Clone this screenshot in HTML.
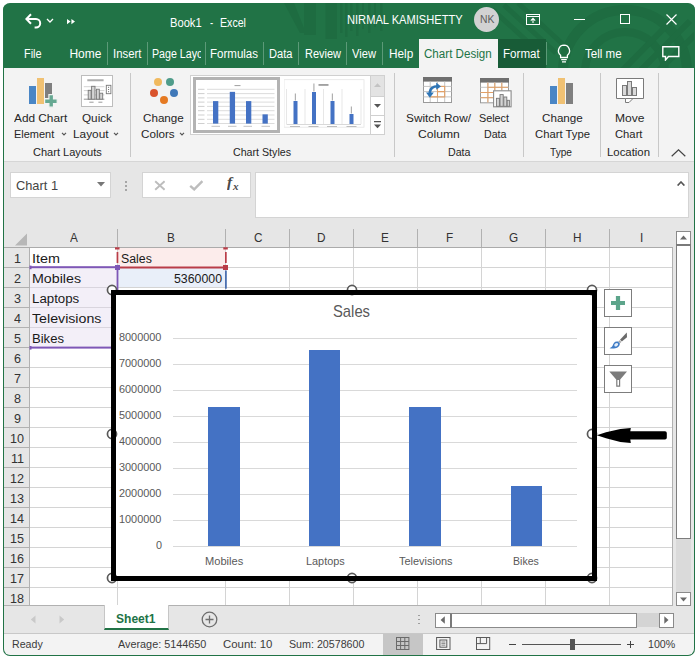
<!DOCTYPE html>
<html><head><meta charset="utf-8"><title>Book1 - Excel</title>
<style>
html,body{margin:0;padding:0;background:#fff;}
body{width:699px;height:662px;position:relative;overflow:hidden;font-family:"Liberation Sans",sans-serif;}
#win{position:absolute;left:3px;top:3px;width:692px;height:653px;border-radius:7px;overflow:hidden;background:#e6e6e6;box-sizing:border-box;}
#in{position:absolute;left:-3px;top:-3px;width:699px;height:662px;}
.r{position:absolute;box-sizing:border-box;}
.t{position:absolute;white-space:pre;transform-origin:0 50%;}
.clip{position:absolute;overflow:hidden;}
</style></head><body>
<div id="win"><div id="in">
<div class="r" style="left:0px;top:0px;width:699px;height:68px;background:#217346;"></div>
<svg class="r" style="left:280px;top:3px" width="419" height="65" viewBox="0 0 419 65">
<g fill="#1e6c41">
<path d="M4 0 H14 L26 30 H20 Z"/>
<rect x="24" y="0" width="12" height="32"/><rect x="45.5" y="0" width="11.5" height="36"/>
<rect x="60" y="0" width="2.5" height="30"/><rect x="65" y="0" width="2.5" height="34"/><rect x="70" y="0" width="2.5" height="28"/>
<rect x="76" y="0" width="2.5" height="33"/><rect x="82" y="0" width="2" height="26"/><rect x="88" y="0" width="2.5" height="30"/>
<rect x="94" y="0" width="2" height="24"/><rect x="100" y="0" width="2.5" height="28"/>
</g>
<g stroke="#1e6c41" fill="none">
<circle cx="345" cy="69" r="62" stroke-width="10"/><circle cx="345" cy="69" r="40" stroke-width="8"/>
<path d="M212 6 L262 52 M224 2 L276 50 M238 0 L288 46" stroke-width="5"/>
<path d="M340 70 L395 14 M356 72 L410 18 M372 74 L419 28" stroke-width="6"/>
</g></svg>
<svg class="r" style="left:24px;top:12px" width="20" height="18" viewBox="0 0 20 18"><path d="M3 7 H12 A4.2 4.2 0 0 1 12 15.4 H10.6" fill="none" stroke="#fff" stroke-width="2"/><path d="M7 2.2 L2.4 7 L7 11.8" fill="none" stroke="#fff" stroke-width="2"/></svg>
<svg class="r" style="left:46px;top:18px" width="8" height="6" viewBox="0 0 8 6"><path d="M1 1 L4 4 L7 1" fill="none" stroke="#fff" stroke-width="1.3"/></svg>
<svg class="r" style="left:66px;top:18px" width="10" height="8" viewBox="0 0 10 8"><path d="M1 1 L4.6 3.6 L1 6.2 Z M5.4 1 L9 3.6 L5.4 6.2 Z" fill="#fff"/></svg>
<span class="t" style="left:170.40px;top:16.00px;font-size:12px;line-height:15px;color:#fff;transform:scaleX(0.9294);">Book1</span>
<span class="t" style="left:210.00px;top:16.00px;font-size:12px;line-height:15px;color:#fff;transform:scaleX(0.8000);">-</span>
<span class="t" style="left:220.40px;top:16.00px;font-size:12px;line-height:15px;color:#fff;transform:scaleX(0.8851);">Excel</span>
<span class="t" style="left:347.40px;top:13.00px;font-size:12px;line-height:15px;color:#fff;transform:scaleX(0.9265);">NIRMAL KAMISHETTY</span>
<div class="r" style="left:473.5px;top:7px;width:25px;height:25px;background:#d2d2d2;border-radius:50%;"></div>
<span class="t" style="left:479.60px;top:12.00px;font-size:11px;line-height:14px;color:#5c5c5c;transform:scaleX(0.9404);">NK</span>
<svg class="r" style="left:526px;top:13.5px" width="14" height="11" viewBox="0 0 14 11"><rect x="0.5" y="0.5" width="13" height="10" fill="none" stroke="#fff" stroke-width="1"/><path d="M0.5 2.5 H13.5" stroke="#fff"/><path d="M7 9 V4.5 M4.8 6.6 L7 4.4 L9.2 6.6" fill="none" stroke="#fff" stroke-width="1.1"/></svg>
<div class="r" style="left:574px;top:18.5px;width:11px;height:1.2px;background:#fff;"></div>
<div class="r" style="left:620px;top:14px;width:10px;height:10px;border:1.2px solid #fff;"></div>
<svg class="r" style="left:666px;top:13.5px" width="11" height="11" viewBox="0 0 11 11"><path d="M0.5 0.5 L10.5 10.5 M10.5 0.5 L0.5 10.5" stroke="#fff" stroke-width="1.2"/></svg>
<span class="t" style="left:24.40px;top:47.00px;font-size:12px;line-height:15px;color:#fff;transform:scaleX(0.9113);">File</span>
<span class="t" style="left:69.40px;top:47.00px;font-size:12px;line-height:15px;color:#fff;transform:scaleX(1.0000);">Home</span>
<span class="t" style="left:113.30px;top:47.00px;font-size:12px;line-height:15px;color:#fff;transform:scaleX(0.9467);">Insert</span>
<div class="clip" style="left:151.10px;top:47.00px;width:49.6px;height:15px"><span class="t" style="left:152.10px;top:47.00px;font-size:12px;line-height:15px;color:#fff;transform:scaleX(0.8876);left:1.00px;top:0">Page Layout</span></div>
<span class="t" style="left:210.40px;top:47.00px;font-size:12px;line-height:15px;color:#fff;transform:scaleX(0.9600);">Formulas</span>
<span class="t" style="left:269.00px;top:47.00px;font-size:12px;line-height:15px;color:#fff;transform:scaleX(0.9222);">Data</span>
<span class="t" style="left:304.70px;top:47.00px;font-size:12px;line-height:15px;color:#fff;transform:scaleX(0.9128);">Review</span>
<span class="t" style="left:352.30px;top:47.00px;font-size:12px;line-height:15px;color:#fff;transform:scaleX(0.9275);">View</span>
<span class="t" style="left:388.70px;top:47.00px;font-size:12px;line-height:15px;color:#fff;transform:scaleX(0.9843);">Help</span>
<div class="r" style="left:106.9px;top:42px;width:1px;height:23px;background:#5c9a78;"></div>
<div class="r" style="left:147.1px;top:42px;width:1px;height:23px;background:#5c9a78;"></div>
<div class="r" style="left:205.1px;top:42px;width:1px;height:23px;background:#5c9a78;"></div>
<div class="r" style="left:263.1px;top:42px;width:1px;height:23px;background:#5c9a78;"></div>
<div class="r" style="left:297.5px;top:42px;width:1px;height:23px;background:#5c9a78;"></div>
<div class="r" style="left:345.8px;top:42px;width:1px;height:23px;background:#5c9a78;"></div>
<div class="r" style="left:381.5px;top:42px;width:1px;height:23px;background:#5c9a78;"></div>
<div class="r" style="left:419px;top:39px;width:79px;height:29px;background:#f3f3f3;"></div>
<span class="t" style="left:424.30px;top:47.00px;font-size:12px;line-height:15px;color:#217346;transform:scaleX(0.9663);">Chart Design</span>
<div class="r" style="left:498px;top:39px;width:48px;height:29px;background:#185c37;"></div>
<span class="t" style="left:503.30px;top:47.00px;font-size:12px;line-height:15px;color:#fff;transform:scaleX(0.9658);">Format</span>
<div class="r" style="left:546px;top:42px;width:1px;height:23px;background:#5c9a78;"></div>
<svg class="r" style="left:556px;top:44px" width="16" height="20" viewBox="0 0 16 20"><path d="M8 1.2 A5.6 5.6 0 0 0 4.6 11.2 V13.5 H11.4 V11.2 A5.6 5.6 0 0 0 8 1.2 Z" fill="none" stroke="#fff" stroke-width="1.3"/><path d="M5.2 15.6 H10.8 M6 17.8 H10" stroke="#fff" stroke-width="1.2"/></svg>
<span class="t" style="left:585.00px;top:47.00px;font-size:12px;line-height:15px;color:#fff;transform:scaleX(0.9658);">Tell me</span>
<svg class="r" style="left:662px;top:46px" width="18" height="15" viewBox="0 0 18 15"><path d="M0.8 0.8 H16.8 V10.5 H6.5 L3.5 14 V10.5 H0.8 Z" fill="none" stroke="#fff" stroke-width="1.4"/></svg>
<div class="r" style="left:0px;top:68px;width:699px;height:93.5px;background:#f3f3f3;"></div>
<div class="r" style="left:0px;top:161px;width:699px;height:1px;background:#d6d6d6;"></div>
<div class="r" style="left:29px;top:86px;width:7px;height:17.6px;background:#4a86c5;"></div>
<div class="r" style="left:36.6px;top:78px;width:7.4px;height:25.6px;background:#f0c173;"></div>
<div class="r" style="left:45.2px;top:83px;width:6.5px;height:14.5px;background:#7f7f7f;"></div>
<svg class="r" style="left:44px;top:94px" width="14" height="14" viewBox="0 0 14 14"><path d="M4.9 0.6 H9.5 V4.9 H13.2 V9.5 H9.5 V13.2 H4.9 V9.5 H0.6 V4.9 H4.9 Z" fill="#66a892" stroke="#f3f3f3" stroke-width="1.2"/></svg>
<span class="t" style="left:14.30px;top:111.00px;font-size:11.5px;line-height:14px;color:#262626;transform:scaleX(1.0280);">Add Chart</span>
<span class="t" style="left:14.30px;top:127.00px;font-size:11.5px;line-height:14px;color:#262626;transform:scaleX(0.9529);">Element</span>
<svg class="r" style="left:61px;top:131.9px" width="6" height="4" viewBox="0 0 6 4"><path d="M1 0.8 L3 2.9 L5 0.8" fill="none" stroke="#555" stroke-width="1.15"/></svg>
<div class="r" style="left:81.3px;top:75.3px;width:31.4px;height:31.4px;background:#fff;border:1px solid #bdbdbd;"></div>
<svg class="r" style="left:82px;top:76px" width="30" height="30" viewBox="0 0 30 30"><path d="M5.3 4.2 H21.6" stroke-width="2" stroke="#adadad"/>
<g stroke="#c6c6c6" stroke-width="0.8"><path d="M1.8 10.7 H22.4 M1.8 14.6 H22.4 M1.8 18.9 H22.4"/></g>
<path d="M1.8 23.2 H22.4" stroke="#8a8a8a" stroke-width="0.9"/>
<g fill="#d4d4d4" stroke="#777" stroke-width="0.9">
<rect x="6.2" y="14.3" width="2.9" height="8.9"/><rect x="9.6" y="10.3" width="3.4" height="12.9"/><rect x="14.4" y="13.2" width="2.9" height="10"/><rect x="17.7" y="17.2" width="3" height="6"/></g>
<rect x="24.3" y="9.3" width="4.6" height="8.4" fill="#fff" stroke="#777" stroke-width="0.9"/>
<g fill="#666"><rect x="26.1" y="10.8" width="1" height="1"/><rect x="26.1" y="13" width="1" height="1"/><rect x="26.1" y="15.2" width="1" height="1"/></g>
<path d="M7.3 26.2 H11.6 M16.4 26.2 H20.4" stroke="#9a9a9a" stroke-width="1"/></svg>
<span class="t" style="left:81.80px;top:111.00px;font-size:11.5px;line-height:14px;color:#262626;transform:scaleX(1.0191);">Quick</span>
<span class="t" style="left:73.30px;top:127.00px;font-size:11.5px;line-height:14px;color:#262626;transform:scaleX(1.0290);">Layout</span>
<svg class="r" style="left:113px;top:131.9px" width="6" height="4" viewBox="0 0 6 4"><path d="M1 0.8 L3 2.9 L5 0.8" fill="none" stroke="#555" stroke-width="1.15"/></svg>
<span class="t" style="left:32.50px;top:145.00px;font-size:11.5px;line-height:14px;color:#262626;transform:scaleX(0.9606);">Chart Layouts</span>
<div class="r" style="left:130px;top:73px;width:1px;height:84px;background:#c8c8c8;"></div>
<div class="r" style="left:154px;top:78px;width:8px;height:8px;background:#f0b95e;border-radius:50%;"></div>
<div class="r" style="left:166px;top:78px;width:8px;height:8px;background:#4f9c8a;border-radius:50%;"></div>
<div class="r" style="left:150px;top:89px;width:8px;height:8px;background:#d9532c;border-radius:50%;"></div>
<div class="r" style="left:170px;top:89px;width:8px;height:8px;background:#3f78b8;border-radius:50%;"></div>
<div class="r" style="left:160px;top:96px;width:8px;height:8px;background:#e57a22;border-radius:50%;"></div>
<span class="t" style="left:143.00px;top:111.00px;font-size:11.5px;line-height:14px;color:#262626;transform:scaleX(1.0121);">Change</span>
<span class="t" style="left:141.30px;top:127.00px;font-size:11.5px;line-height:14px;color:#262626;transform:scaleX(1.0135);">Colors</span>
<svg class="r" style="left:179px;top:131.9px" width="6" height="4" viewBox="0 0 6 4"><path d="M1 0.8 L3 2.9 L5 0.8" fill="none" stroke="#555" stroke-width="1.15"/></svg>
<div class="r" style="left:190px;top:75px;width:194.5px;height:59.5px;background:#fff;border:1px solid #d0d0d0;"></div>
<div class="r" style="left:192.5px;top:77px;width:87px;height:55.5px;background:#fff;border:3px solid #b3b3b3;"></div>
<svg class="r" style="left:192.5px;top:72.5px" width="87" height="60" viewBox="0 0 87 60"><g stroke="#cdcdcd" stroke-width="0.7"><path d="M14 16.3 H81.5"/><path d="M14 20.6 H81.5"/><path d="M14 24.9 H81.5"/><path d="M14 29.1 H81.5"/><path d="M14 33.4 H81.5"/><path d="M14 37.7 H81.5"/><path d="M14 42.0 H81.5"/><path d="M14 46.3 H81.5"/><path d="M14 50.5 H81.5"/></g><rect x="20" y="28.1" width="5.3" height="22.5" fill="#4472c4"/><rect x="36.75" y="18.85" width="5.3" height="31.75" fill="#4472c4"/><rect x="53" y="28.1" width="5.3" height="22.5" fill="#4472c4"/><rect x="69.5" y="41.35" width="5.3" height="9.25" fill="#4472c4"/><rect x="5" y="15.8" width="6.5" height="1" fill="#cfcfcf"/><rect x="5" y="20.1" width="6.5" height="1" fill="#cfcfcf"/><rect x="5" y="24.4" width="6.5" height="1" fill="#cfcfcf"/><rect x="5" y="28.6" width="6.5" height="1" fill="#cfcfcf"/><rect x="5" y="32.9" width="6.5" height="1" fill="#cfcfcf"/><rect x="5" y="37.2" width="6.5" height="1" fill="#cfcfcf"/><rect x="5" y="41.5" width="6.5" height="1" fill="#cfcfcf"/><rect x="5" y="45.8" width="6.5" height="1" fill="#cfcfcf"/><rect x="5" y="50.0" width="6.5" height="1" fill="#cfcfcf"/><rect x="18.5" y="52.8" width="8.5" height="1" fill="#c4c4c4"/><rect x="35" y="52.8" width="8.5" height="1" fill="#c4c4c4"/><rect x="50.5" y="52.8" width="8.5" height="1" fill="#c4c4c4"/><rect x="68.5" y="52.8" width="8.5" height="1" fill="#c4c4c4"/><rect x="41.5" y="12" width="6" height="1.1" fill="#a8a8a8"/></svg>
<svg class="r" style="left:284px;top:68.8px" width="82" height="62" viewBox="0 0 82 62"><rect x="0" y="10.7" width="80" height="47.5" fill="none" stroke="#e4e4e4" stroke-width="0.8"/><g stroke="#dcdcdc" stroke-width="0.7"><path d="M2.5 20 V55"/><path d="M21 20 V55"/><path d="M39.5 20 V55"/><path d="M58 20 V55"/><path d="M77 20 V55"/><path d="M2.5 55.5 H77" stroke="#c8c8c8"/></g><rect x="9.5" y="32" width="4" height="23" fill="#4472c4"/><rect x="10.8" y="24.5" width="1.2" height="7" fill="#b0b0b0"/><rect x="28" y="23" width="4" height="32" fill="#4472c4"/><rect x="29.3" y="14.5" width="1.2" height="8" fill="#b0b0b0"/><rect x="46.5" y="32" width="4" height="23" fill="#4472c4"/><rect x="47.8" y="24.5" width="1.2" height="7" fill="#b0b0b0"/><rect x="65.5" y="45" width="4" height="10" fill="#4472c4"/><rect x="66.8" y="37.5" width="1.2" height="7" fill="#b0b0b0"/><rect x="6" y="57" width="10" height="1" fill="#bdbdbd"/><rect x="24.5" y="57" width="10" height="1" fill="#bdbdbd"/><rect x="43" y="57" width="10" height="1" fill="#bdbdbd"/><rect x="62.5" y="57" width="10" height="1" fill="#bdbdbd"/><rect x="34.5" y="15.2" width="10" height="1.5" fill="#8a8a8a"/></svg>
<div class="r" style="left:369.5px;top:75px;width:15px;height:21.5px;background:#e3e3e3;border:1px solid #d0d0d0;"></div>
<div class="r" style="left:369.5px;top:95.5px;width:15px;height:20px;background:#fff;border:1px solid #d0d0d0;"></div>
<div class="r" style="left:369.5px;top:114.5px;width:15px;height:20px;background:#fff;border:1px solid #d0d0d0;"></div>
<svg class="r" style="left:373.5px;top:83px" width="7" height="4" viewBox="0 0 7 4"><path d="M0 4 L3.5 0.3 L7 4 Z" fill="#c3c3c3"/></svg>
<svg class="r" style="left:373.5px;top:104px" width="7" height="4" viewBox="0 0 7 4"><path d="M0 0 L3.5 3.7 L7 0 Z" fill="#555"/></svg>
<svg class="r" style="left:373.5px;top:120.5px" width="7" height="8" viewBox="0 0 7 8"><path d="M0 0.6 H7" stroke="#555" stroke-width="1.2"/><path d="M0 3.5 L3.5 7.2 L7 3.5 Z" fill="#555"/></svg>
<span class="t" style="left:232.50px;top:145.00px;font-size:11.5px;line-height:14px;color:#262626;transform:scaleX(0.9261);">Chart Styles</span>
<div class="r" style="left:394px;top:73px;width:1px;height:84px;background:#c8c8c8;"></div>
<svg class="r" style="left:423px;top:77px" width="29" height="26" viewBox="0 0 29 26"><rect x="0.5" y="0.5" width="28" height="25" fill="#fff" stroke="#9a9a9a"/><rect x="0" y="0" width="29" height="4.6" fill="#6f6f6f"/>
<g stroke="#c4c4c4" stroke-width="1"><path d="M0.5 9.4 H28.5 M0.5 14.6 H28.5 M0.5 19.9 H28.5 M7.2 4.6 V25 M14.5 4.6 V25 M21.7 4.6 V25"/></g>
<g fill="none" stroke="#e2a066" stroke-width="1.1"><rect x="14.5" y="9.4" width="7.2" height="10.5"/><path d="M14.5 14.6 H21.7 M7.2 19.9 H14.5"/></g>
<path d="M6.8 17 C6.6 11.5 10 9.3 15 9.3" fill="none" stroke="#2f75b5" stroke-width="2.6"/><path d="M13.2 5.4 L18 9.4 L13.2 12.8 Z" fill="#2f75b5"/><path d="M3 15.6 L6.9 20.7 L10.8 15.6 Z" fill="#2f75b5"/></svg>
<span class="t" style="left:405.50px;top:111.00px;font-size:11.5px;line-height:14px;color:#262626;transform:scaleX(1.0267);">Switch Row/</span>
<span class="t" style="left:417.50px;top:127.00px;font-size:11.5px;line-height:14px;color:#262626;transform:scaleX(1.0549);">Column</span>
<svg class="r" style="left:480px;top:78px" width="32" height="30" viewBox="0 0 32 30"><rect x="0.5" y="0.5" width="28" height="24.3" fill="#fff" stroke="#9a9a9a"/><rect x="0" y="0" width="29" height="4.6" fill="#6f6f6f"/>
<g stroke="#c4c4c4"><path d="M0.5 9.3 H28.5 M0.5 14.5 H28.5 M0.5 19.7 H28.5 M7.9 4.6 V24.5 M14.8 4.6 V24.5 M21.8 4.6 V24.5"/></g>
<path d="M7.9 4.6 V24.5 M7.9 9.3 H28 M0.5 14.5 H14 M0.5 19.7 H14 M14.8 4.6 V12 M21.8 4.6 V12" stroke="#e2a066" fill="none"/>
<rect x="13.6" y="12.8" width="17.5" height="16" fill="#fff" stroke="#8a8a8a" stroke-width="1.1"/>
<g fill="#d4d4d4" stroke="#777" stroke-width="0.9"><rect x="16.4" y="20.3" width="3" height="8"/><rect x="20" y="16.6" width="3.2" height="11.7"/><rect x="23.8" y="19" width="3" height="9.3"/><rect x="27.2" y="22.3" width="2.2" height="6"/></g></svg>
<span class="t" style="left:479.30px;top:111.00px;font-size:11.5px;line-height:14px;color:#262626;transform:scaleX(0.9393);">Select</span>
<span class="t" style="left:483.80px;top:127.00px;font-size:11.5px;line-height:14px;color:#262626;transform:scaleX(0.9254);">Data</span>
<span class="t" style="left:447.50px;top:145.00px;font-size:11.5px;line-height:14px;color:#262626;transform:scaleX(0.9254);">Data</span>
<div class="r" style="left:523px;top:73px;width:1px;height:84px;background:#c8c8c8;"></div>
<div class="r" style="left:549.8px;top:86.3px;width:7.2px;height:17.5px;background:#4a86c5;"></div>
<div class="r" style="left:557.6px;top:78px;width:7.6px;height:25.8px;background:#f0c173;"></div>
<div class="r" style="left:566px;top:83px;width:6.8px;height:20.8px;background:#7f7f7f;"></div>
<span class="t" style="left:542.00px;top:111.00px;font-size:11.5px;line-height:14px;color:#262626;transform:scaleX(1.0121);">Change</span>
<span class="t" style="left:534.50px;top:127.00px;font-size:11.5px;line-height:14px;color:#262626;transform:scaleX(0.9810);">Chart Type</span>
<span class="t" style="left:550.30px;top:145.00px;font-size:11.5px;line-height:14px;color:#262626;transform:scaleX(0.8822);">Type</span>
<div class="r" style="left:600px;top:73px;width:1px;height:84px;background:#c8c8c8;"></div>
<svg class="r" style="left:616px;top:78px" width="28" height="25" viewBox="0 0 28 25"><path d="M0.5 0.5 H27.5 V20.5 H17 L13 24.5 H9.5 V20.5 H0.5 Z" fill="#fff" stroke="#7a7a7a"/><path d="M9.5 20.5 H17" stroke="#7a7a7a"/>
<g fill="#d9d9d9" stroke="#7a7a7a"><rect x="6.5" y="7.5" width="4" height="10"/><rect x="11.5" y="3.5" width="4" height="14"/><rect x="16.5" y="9.5" width="4" height="8"/></g></svg>
<span class="t" style="left:615.30px;top:111.00px;font-size:11.5px;line-height:14px;color:#262626;transform:scaleX(1.0489);">Move</span>
<span class="t" style="left:615.30px;top:127.00px;font-size:11.5px;line-height:14px;color:#262626;transform:scaleX(0.9778);">Chart</span>
<span class="t" style="left:607.30px;top:145.00px;font-size:11.5px;line-height:14px;color:#262626;transform:scaleX(0.9885);">Location</span>
<div class="r" style="left:658px;top:73px;width:1px;height:84px;background:#c8c8c8;"></div>
<svg class="r" style="left:671px;top:149px" width="15" height="8" viewBox="0 0 15 8"><path d="M0.7 7.3 L7.5 0.8 L14.3 7.3" fill="none" stroke="#444" stroke-width="1.2"/></svg>
<div class="r" style="left:0px;top:162px;width:699px;height:66px;background:#e6e6e6;"></div>
<div class="r" style="left:10px;top:172px;width:100.5px;height:26px;background:#fff;border:1px solid #d4d4d4;"></div>
<span class="t" style="left:16.30px;top:178.00px;font-size:13px;line-height:16px;color:#444;transform:scaleX(0.9853);">Chart 1</span>
<svg class="r" style="left:96.5px;top:182px" width="8" height="5" viewBox="0 0 8 5"><path d="M0 0 H8 L4 4.6 Z" fill="#777"/></svg>
<div class="r" style="left:125.3px;top:180.5px;width:2px;height:2px;background:#a6a6a6;"></div>
<div class="r" style="left:125.3px;top:184.5px;width:2px;height:2px;background:#a6a6a6;"></div>
<div class="r" style="left:125.3px;top:188.5px;width:2px;height:2px;background:#a6a6a6;"></div>
<div class="r" style="left:141.5px;top:172px;width:109px;height:26px;background:#fff;border:1px solid #d4d4d4;"></div>
<svg class="r" style="left:154px;top:180px" width="12" height="11" viewBox="0 0 12 11"><path d="M1.2 1.2 L10.6 9.8 M10.6 1.2 L1.2 9.8" stroke="#bdbdbd" stroke-width="1.9"/></svg>
<svg class="r" style="left:189px;top:180px" width="15" height="11" viewBox="0 0 15 11"><path d="M1.2 5.8 L5.2 9.4 L13.4 1.2" fill="none" stroke="#bdbdbd" stroke-width="2.4"/></svg>
<span class="t" style="left:227.00px;top:173.00px;font-size:15px;line-height:19px;color:#4a4a4a;transform:scaleX(1.0400);font-weight:bold;font-style:italic;font-family:'Liberation Serif',serif;">f</span>
<span class="t" style="left:232.64px;top:181.00px;font-size:10px;line-height:12px;color:#4a4a4a;transform:scaleX(1.1122);font-weight:bold;font-style:italic;font-family:'Liberation Serif',serif;">x</span>
<div class="r" style="left:254.5px;top:172px;width:434.5px;height:46px;background:#fff;border:1px solid #d4d4d4;"></div>
<svg class="r" style="left:677px;top:181px" width="8" height="5" viewBox="0 0 8 5"><path d="M0.6 4.6 L4 1 L7.4 4.6" fill="none" stroke="#555" stroke-width="1.6"/></svg>
<div class="r" style="left:4px;top:228px;width:669px;height:377px;background:#fff;"></div>
<div class="r" style="left:4px;top:228px;width:669px;height:19px;background:#e6e6e6;"></div>
<div class="r" style="left:4px;top:228px;width:25px;height:377px;background:#e6e6e6;"></div>
<svg class="r" style="left:14px;top:233px" width="14" height="13" viewBox="0 0 14 13"><path d="M13 0.5 V12.5 H1 Z" fill="#b7b7b7"/></svg>
<div class="r" style="left:117px;top:248px;width:1px;height:357px;background:#d4d4d4;"></div>
<div class="r" style="left:117px;top:229px;width:1px;height:19px;background:#b1b1b1;"></div>
<div class="r" style="left:225px;top:248px;width:1px;height:357px;background:#d4d4d4;"></div>
<div class="r" style="left:225px;top:229px;width:1px;height:19px;background:#b1b1b1;"></div>
<div class="r" style="left:289px;top:248px;width:1px;height:357px;background:#d4d4d4;"></div>
<div class="r" style="left:289px;top:229px;width:1px;height:19px;background:#b1b1b1;"></div>
<div class="r" style="left:353px;top:248px;width:1px;height:357px;background:#d4d4d4;"></div>
<div class="r" style="left:353px;top:229px;width:1px;height:19px;background:#b1b1b1;"></div>
<div class="r" style="left:417px;top:248px;width:1px;height:357px;background:#d4d4d4;"></div>
<div class="r" style="left:417px;top:229px;width:1px;height:19px;background:#b1b1b1;"></div>
<div class="r" style="left:481px;top:248px;width:1px;height:357px;background:#d4d4d4;"></div>
<div class="r" style="left:481px;top:229px;width:1px;height:19px;background:#b1b1b1;"></div>
<div class="r" style="left:545px;top:248px;width:1px;height:357px;background:#d4d4d4;"></div>
<div class="r" style="left:545px;top:229px;width:1px;height:19px;background:#b1b1b1;"></div>
<div class="r" style="left:609px;top:248px;width:1px;height:357px;background:#d4d4d4;"></div>
<div class="r" style="left:609px;top:229px;width:1px;height:19px;background:#b1b1b1;"></div>
<div class="r" style="left:672px;top:248px;width:1px;height:357px;background:#d4d4d4;"></div>
<div class="r" style="left:29px;top:248px;width:1px;height:357px;background:#b1b1b1;"></div>
<div class="r" style="left:4px;top:247px;width:669px;height:1px;background:#ababab;"></div>
<div class="r" style="left:30px;top:267px;width:643px;height:1px;background:#d4d4d4;"></div>
<div class="r" style="left:4px;top:267px;width:26px;height:1px;background:#b1b1b1;"></div>
<div class="r" style="left:30px;top:287px;width:643px;height:1px;background:#d4d4d4;"></div>
<div class="r" style="left:4px;top:287px;width:26px;height:1px;background:#b1b1b1;"></div>
<div class="r" style="left:30px;top:307px;width:643px;height:1px;background:#d4d4d4;"></div>
<div class="r" style="left:4px;top:307px;width:26px;height:1px;background:#b1b1b1;"></div>
<div class="r" style="left:30px;top:327px;width:643px;height:1px;background:#d4d4d4;"></div>
<div class="r" style="left:4px;top:327px;width:26px;height:1px;background:#b1b1b1;"></div>
<div class="r" style="left:30px;top:347px;width:643px;height:1px;background:#d4d4d4;"></div>
<div class="r" style="left:4px;top:347px;width:26px;height:1px;background:#b1b1b1;"></div>
<div class="r" style="left:30px;top:367px;width:643px;height:1px;background:#d4d4d4;"></div>
<div class="r" style="left:4px;top:367px;width:26px;height:1px;background:#b1b1b1;"></div>
<div class="r" style="left:30px;top:387px;width:643px;height:1px;background:#d4d4d4;"></div>
<div class="r" style="left:4px;top:387px;width:26px;height:1px;background:#b1b1b1;"></div>
<div class="r" style="left:30px;top:407px;width:643px;height:1px;background:#d4d4d4;"></div>
<div class="r" style="left:4px;top:407px;width:26px;height:1px;background:#b1b1b1;"></div>
<div class="r" style="left:30px;top:427px;width:643px;height:1px;background:#d4d4d4;"></div>
<div class="r" style="left:4px;top:427px;width:26px;height:1px;background:#b1b1b1;"></div>
<div class="r" style="left:30px;top:447px;width:643px;height:1px;background:#d4d4d4;"></div>
<div class="r" style="left:4px;top:447px;width:26px;height:1px;background:#b1b1b1;"></div>
<div class="r" style="left:30px;top:467px;width:643px;height:1px;background:#d4d4d4;"></div>
<div class="r" style="left:4px;top:467px;width:26px;height:1px;background:#b1b1b1;"></div>
<div class="r" style="left:30px;top:487px;width:643px;height:1px;background:#d4d4d4;"></div>
<div class="r" style="left:4px;top:487px;width:26px;height:1px;background:#b1b1b1;"></div>
<div class="r" style="left:30px;top:507px;width:643px;height:1px;background:#d4d4d4;"></div>
<div class="r" style="left:4px;top:507px;width:26px;height:1px;background:#b1b1b1;"></div>
<div class="r" style="left:30px;top:527px;width:643px;height:1px;background:#d4d4d4;"></div>
<div class="r" style="left:4px;top:527px;width:26px;height:1px;background:#b1b1b1;"></div>
<div class="r" style="left:30px;top:547px;width:643px;height:1px;background:#d4d4d4;"></div>
<div class="r" style="left:4px;top:547px;width:26px;height:1px;background:#b1b1b1;"></div>
<div class="r" style="left:30px;top:567px;width:643px;height:1px;background:#d4d4d4;"></div>
<div class="r" style="left:4px;top:567px;width:26px;height:1px;background:#b1b1b1;"></div>
<div class="r" style="left:30px;top:587px;width:643px;height:1px;background:#d4d4d4;"></div>
<div class="r" style="left:4px;top:587px;width:26px;height:1px;background:#b1b1b1;"></div>
<div class="r" style="left:672px;top:248px;width:1px;height:357px;background:#b1b1b1;"></div>
<div class="r" style="left:4px;top:604.6px;width:669px;height:1px;background:#b1b1b1;"></div>
<span class="t" style="left:70.18px;top:231.00px;font-size:12px;line-height:15px;color:#333;transform:scaleX(0.9800);">A</span>
<span class="t" style="left:167.38px;top:231.00px;font-size:12px;line-height:15px;color:#333;transform:scaleX(0.9800);">B</span>
<span class="t" style="left:253.64px;top:231.00px;font-size:12px;line-height:15px;color:#333;transform:scaleX(0.9800);">C</span>
<span class="t" style="left:316.74px;top:231.00px;font-size:12px;line-height:15px;color:#333;transform:scaleX(0.9800);">D</span>
<span class="t" style="left:381.38px;top:231.00px;font-size:12px;line-height:15px;color:#333;transform:scaleX(0.9800);">E</span>
<span class="t" style="left:446.22px;top:231.00px;font-size:12px;line-height:15px;color:#333;transform:scaleX(0.9800);">F</span>
<span class="t" style="left:509.24px;top:231.00px;font-size:12px;line-height:15px;color:#333;transform:scaleX(0.9800);">G</span>
<span class="t" style="left:573.14px;top:231.00px;font-size:12px;line-height:15px;color:#333;transform:scaleX(0.9800);">H</span>
<span class="t" style="left:639.58px;top:231.00px;font-size:12px;line-height:15px;color:#333;transform:scaleX(0.9800);">I</span>
<span class="t" style="left:13.78px;top:251.00px;font-size:13px;line-height:16px;color:#333;transform:scaleX(0.9700);">1</span>
<span class="t" style="left:13.78px;top:271.00px;font-size:13px;line-height:16px;color:#333;transform:scaleX(0.9700);">2</span>
<span class="t" style="left:13.78px;top:291.00px;font-size:13px;line-height:16px;color:#333;transform:scaleX(0.9700);">3</span>
<span class="t" style="left:13.78px;top:311.00px;font-size:13px;line-height:16px;color:#333;transform:scaleX(0.9700);">4</span>
<span class="t" style="left:13.78px;top:331.00px;font-size:13px;line-height:16px;color:#333;transform:scaleX(0.9700);">5</span>
<span class="t" style="left:13.78px;top:351.00px;font-size:13px;line-height:16px;color:#333;transform:scaleX(0.9700);">6</span>
<span class="t" style="left:13.78px;top:371.00px;font-size:13px;line-height:16px;color:#333;transform:scaleX(0.9700);">7</span>
<span class="t" style="left:13.78px;top:391.00px;font-size:13px;line-height:16px;color:#333;transform:scaleX(0.9700);">8</span>
<span class="t" style="left:13.78px;top:411.00px;font-size:13px;line-height:16px;color:#333;transform:scaleX(0.9700);">9</span>
<span class="t" style="left:10.30px;top:431.00px;font-size:13px;line-height:16px;color:#333;transform:scaleX(0.9700);">10</span>
<span class="t" style="left:10.75px;top:451.00px;font-size:13px;line-height:16px;color:#333;transform:scaleX(0.9700);">11</span>
<span class="t" style="left:10.30px;top:471.00px;font-size:13px;line-height:16px;color:#333;transform:scaleX(0.9700);">12</span>
<span class="t" style="left:10.30px;top:491.00px;font-size:13px;line-height:16px;color:#333;transform:scaleX(0.9700);">13</span>
<span class="t" style="left:10.30px;top:511.00px;font-size:13px;line-height:16px;color:#333;transform:scaleX(0.9700);">14</span>
<span class="t" style="left:10.30px;top:531.00px;font-size:13px;line-height:16px;color:#333;transform:scaleX(0.9700);">15</span>
<span class="t" style="left:10.30px;top:551.00px;font-size:13px;line-height:16px;color:#333;transform:scaleX(0.9700);">16</span>
<span class="t" style="left:10.30px;top:571.00px;font-size:13px;line-height:16px;color:#333;transform:scaleX(0.9700);">17</span>
<span class="t" style="left:10.30px;top:591.00px;font-size:13px;line-height:16px;color:#333;transform:scaleX(0.9700);">18</span>
<div class="r" style="left:30px;top:268px;width:87px;height:79px;background:#f3eff8;"></div>
<div class="r" style="left:118px;top:248px;width:107px;height:19px;background:#fceceb;"></div>
<div class="r" style="left:118px;top:268px;width:107px;height:19px;background:#e9eff9;"></div>
<div class="r" style="left:30px;top:287px;width:87px;height:1px;background:#d9d5de;"></div>
<div class="r" style="left:30px;top:307px;width:87px;height:1px;background:#d9d5de;"></div>
<div class="r" style="left:30px;top:327px;width:87px;height:1px;background:#d9d5de;"></div>
<span class="t" style="left:32.40px;top:252.00px;font-size:12px;line-height:15px;color:#1a1a1a;transform:scaleX(1.1968);">Item</span>
<span class="t" style="left:32.40px;top:272.00px;font-size:12px;line-height:15px;color:#1a1a1a;transform:scaleX(1.1867);">Mobiles</span>
<span class="t" style="left:32.40px;top:292.00px;font-size:12px;line-height:15px;color:#1a1a1a;transform:scaleX(1.1057);">Laptops</span>
<span class="t" style="left:32.40px;top:312.00px;font-size:12px;line-height:15px;color:#1a1a1a;transform:scaleX(1.1825);">Televisions</span>
<span class="t" style="left:32.40px;top:332.00px;font-size:12px;line-height:15px;color:#1a1a1a;transform:scaleX(1.0894);">Bikes</span>
<span class="t" style="left:120.60px;top:252.00px;font-size:12px;line-height:15px;color:#1a1a1a;transform:scaleX(1.0267);">Sales</span>
<span class="t" style="left:174.00px;top:272.00px;font-size:12px;line-height:15px;color:#1a1a1a;transform:scaleX(1.0281);">5360000</span>
<svg class="r" style="left:29px;top:265px" width="89" height="5"><rect x="1.00" y="1.20" width="86" height="2" fill="#7e57b6"/></svg>
<svg class="r" style="left:28px;top:264px" width="5" height="7"><rect x="1.50" y="1.60" width="2" height="3.6" fill="#7e57b6"/></svg>
<svg class="r" style="left:114px;top:264px" width="8" height="8"><rect x="1.00" y="1.00" width="5" height="5" fill="#7e57b6"/></svg>
<svg class="r" style="left:115px;top:269px" width="5" height="23"><rect x="1.60" y="1.00" width="1.8" height="20" fill="#7e57b6"/></svg>
<svg class="r" style="left:29px;top:345px" width="85" height="5"><rect x="1.00" y="1.60" width="82" height="2" fill="#7e57b6"/></svg>
<svg class="r" style="left:28px;top:345px" width="5" height="7"><rect x="1.50" y="1.00" width="2" height="3.6" fill="#7e57b6"/></svg>
<svg class="r" style="left:114px;top:246px" width="8" height="6"><rect x="1.00" y="1.30" width="4.5" height="2.2" fill="#b93d48"/></svg>
<svg class="r" style="left:222px;top:246px" width="8" height="6"><rect x="1.30" y="1.30" width="4.5" height="2.2" fill="#b93d48"/></svg>
<svg class="r" style="left:115px;top:251px" width="5" height="14"><rect x="1.60" y="1.00" width="1.7" height="11" fill="#b93d48"/></svg>
<svg class="r" style="left:224px;top:251px" width="5" height="14"><rect x="1.00" y="1.00" width="1.7" height="11" fill="#b93d48"/></svg>
<svg class="r" style="left:119px;top:265px" width="106" height="5"><rect x="1.00" y="1.50" width="103" height="2" fill="#b93d48"/></svg>
<svg class="r" style="left:222px;top:264px" width="8" height="8"><rect x="1.00" y="1.00" width="5" height="5" fill="#b93d48"/></svg>
<svg class="r" style="left:224px;top:269px" width="5" height="22"><rect x="1.00" y="1.50" width="1.8" height="18.2" fill="#4a6fb0"/></svg>
<div class="r" style="left:111px;top:289.5px;width:486px;height:291.5px;background:#fff;border:5.2px solid #000;"></div>
<span class="t" style="left:332.50px;top:301.00px;font-size:17px;line-height:21px;color:#595959;transform:scaleX(0.8706);">Sales</span>
<div class="r" style="left:173px;top:337.5px;width:404px;height:1px;background:#d9d9d9;"></div>
<span class="t" style="left:119.20px;top:330.00px;font-size:11.5px;line-height:14px;color:#595959;transform:scaleX(0.9475);">8000000</span>
<div class="r" style="left:173px;top:363.5px;width:404px;height:1px;background:#d9d9d9;"></div>
<span class="t" style="left:119.20px;top:356.00px;font-size:11.5px;line-height:14px;color:#595959;transform:scaleX(0.9475);">7000000</span>
<div class="r" style="left:173px;top:389.5px;width:404px;height:1px;background:#d9d9d9;"></div>
<span class="t" style="left:119.20px;top:382.00px;font-size:11.5px;line-height:14px;color:#595959;transform:scaleX(0.9475);">6000000</span>
<div class="r" style="left:173px;top:415.5px;width:404px;height:1px;background:#d9d9d9;"></div>
<span class="t" style="left:119.20px;top:408.00px;font-size:11.5px;line-height:14px;color:#595959;transform:scaleX(0.9475);">5000000</span>
<div class="r" style="left:173px;top:441.5px;width:404px;height:1px;background:#d9d9d9;"></div>
<span class="t" style="left:119.20px;top:434.00px;font-size:11.5px;line-height:14px;color:#595959;transform:scaleX(0.9475);">4000000</span>
<div class="r" style="left:173px;top:467.5px;width:404px;height:1px;background:#d9d9d9;"></div>
<span class="t" style="left:119.20px;top:460.00px;font-size:11.5px;line-height:14px;color:#595959;transform:scaleX(0.9475);">3000000</span>
<div class="r" style="left:173px;top:493.5px;width:404px;height:1px;background:#d9d9d9;"></div>
<span class="t" style="left:119.20px;top:486.00px;font-size:11.5px;line-height:14px;color:#595959;transform:scaleX(0.9475);">2000000</span>
<div class="r" style="left:173px;top:519.5px;width:404px;height:1px;background:#d9d9d9;"></div>
<span class="t" style="left:119.20px;top:512.00px;font-size:11.5px;line-height:14px;color:#595959;transform:scaleX(0.9475);">1000000</span>
<div class="r" style="left:173px;top:545.5px;width:404px;height:1px;background:#d9d9d9;"></div>
<span class="t" style="left:155.60px;top:538.00px;font-size:11.5px;line-height:14px;color:#595959;transform:scaleX(0.9412);">0</span>
<div class="r" style="left:208.4px;top:406.6px;width:31.400000000000006px;height:139.39999999999998px;background:#4472c4;"></div>
<div class="r" style="left:309.3px;top:350.2px;width:30.69999999999999px;height:195.8px;background:#4472c4;"></div>
<div class="r" style="left:409.3px;top:406.6px;width:31.5px;height:139.39999999999998px;background:#4472c4;"></div>
<div class="r" style="left:510.5px;top:485.8px;width:31.5px;height:60.19999999999999px;background:#4472c4;"></div>
<span class="t" style="left:204.80px;top:554.00px;font-size:11.5px;line-height:14px;color:#595959;transform:scaleX(0.9640);">Mobiles</span>
<span class="t" style="left:305.60px;top:554.00px;font-size:11.5px;line-height:14px;color:#595959;transform:scaleX(0.9453);">Laptops</span>
<span class="t" style="left:398.60px;top:554.00px;font-size:11.5px;line-height:14px;color:#595959;transform:scaleX(0.9529);">Televisions</span>
<span class="t" style="left:513.40px;top:554.00px;font-size:11.5px;line-height:14px;color:#595959;transform:scaleX(0.9173);">Bikes</span>
<svg class="r" style="left:105px;top:283.3px" width="14" height="14" viewBox="0 0 14 14"><circle cx="7" cy="7" r="4.55" fill="#fff" stroke="#595959" stroke-width="1.7"/></svg>
<svg class="r" style="left:344.5px;top:283.3px" width="14" height="14" viewBox="0 0 14 14"><circle cx="7" cy="7" r="4.55" fill="#fff" stroke="#595959" stroke-width="1.7"/></svg>
<svg class="r" style="left:584.7px;top:283.3px" width="14" height="14" viewBox="0 0 14 14"><circle cx="7" cy="7" r="4.55" fill="#fff" stroke="#595959" stroke-width="1.7"/></svg>
<svg class="r" style="left:105px;top:426.6px" width="14" height="14" viewBox="0 0 14 14"><circle cx="7" cy="7" r="4.55" fill="#fff" stroke="#595959" stroke-width="1.7"/></svg>
<svg class="r" style="left:584.7px;top:426.6px" width="14" height="14" viewBox="0 0 14 14"><circle cx="7" cy="7" r="4.55" fill="#fff" stroke="#595959" stroke-width="1.7"/></svg>
<svg class="r" style="left:105px;top:570.5px" width="14" height="14" viewBox="0 0 14 14"><circle cx="7" cy="7" r="4.55" fill="#fff" stroke="#595959" stroke-width="1.7"/></svg>
<svg class="r" style="left:344.5px;top:570.5px" width="14" height="14" viewBox="0 0 14 14"><circle cx="7" cy="7" r="4.55" fill="#fff" stroke="#595959" stroke-width="1.7"/></svg>
<svg class="r" style="left:584.7px;top:570.5px" width="14" height="14" viewBox="0 0 14 14"><circle cx="7" cy="7" r="4.55" fill="#fff" stroke="#595959" stroke-width="1.7"/></svg>
<div class="r" style="left:111px;top:289.5px;width:486px;height:291.5px;border:5.2px solid #000;"></div>
<div class="r" style="left:604px;top:289px;width:28px;height:28px;background:#fff;border:1px solid #7d7d7d;"></div>
<div class="r" style="left:604px;top:327px;width:28px;height:28px;background:#fff;border:1px solid #7d7d7d;"></div>
<div class="r" style="left:604px;top:365px;width:28px;height:28px;background:#fff;border:1px solid #7d7d7d;"></div>
<svg class="r" style="left:604px;top:289px" width="28" height="28" viewBox="0 0 28 28"><path d="M11.9 7 H16.1 V11.9 H21 V16.1 H16.1 V21 H11.9 V16.1 H7 V11.9 H11.9 Z" fill="#5da58b"/></svg>
<svg class="r" style="left:604px;top:327px" width="28" height="28" viewBox="0 0 28 28"><path d="M22.8 5.6 L23 10.2 L17.8 14.6 L16 12.8 Z" fill="#6a6a6a"/><path d="M15.6 13.2 L17.4 15 L16 16.2 L14.2 14.4 Z" fill="#a8a8a8"/>
<path d="M14 14.6 C10.5 14 9.5 16.5 8.8 18.2 C8 20 6.5 20.8 5.6 21.2 C9.5 22.2 15.5 21.5 15.9 16.5 Z" fill="#3f7cc6"/><ellipse cx="12.2" cy="17.8" rx="2.1" ry="1.5" transform="rotate(-35 12.2 17.8)" fill="#e3edf8"/></svg>
<svg class="r" style="left:604px;top:365px" width="28" height="28" viewBox="0 0 28 28"><path d="M5.3 6.4 H23 L16.2 14.6 V21.8 H12.2 V14.6 Z" fill="#7c7c7c"/><path d="M13.4 15 H15 V20.6 H13.4 Z" fill="#fff"/></svg>
<svg class="r" style="left:596px;top:425px" width="74" height="20" viewBox="0 0 74 20"><path d="M0.8 10.2 L10 7.2 L24.4 4.1 L34.8 2.9 L34.3 6.2 L69 6.2 Q70.8 6.2 70.8 8 V12.7 Q70.8 14.5 69 14.5 L34.3 14.5 L34.8 17.9 L24.4 16.9 L10 13.2 Z" fill="#000"/></svg>
<div class="r" style="left:676px;top:231px;width:15px;height:375px;background:#dadada;"></div>
<div class="r" style="left:676px;top:230.5px;width:15px;height:14.5px;background:#fff;border:1px solid #8a8a8a;"></div>
<svg class="r" style="left:680px;top:235px" width="7" height="5" viewBox="0 0 7 5"><path d="M0 4.6 L3.5 0.6 L7 4.6 Z" fill="#6a6a6a"/></svg>
<div class="r" style="left:676px;top:244px;width:15px;height:295px;background:#fff;border:1px solid #7d7d7d;border-top:2px solid #7a7a7a;"></div>
<div class="r" style="left:676px;top:591.5px;width:15px;height:14.5px;background:#fff;border:1px solid #8a8a8a;"></div>
<svg class="r" style="left:680px;top:596.5px" width="7" height="5" viewBox="0 0 7 5"><path d="M0 0.4 L3.5 4.4 L7 0.4 Z" fill="#6a6a6a"/></svg>
<div class="r" style="left:4px;top:605.5px;width:691px;height:27.5px;background:#e6e6e6;"></div>
<svg class="r" style="left:30px;top:615px" width="6" height="9" viewBox="0 0 6 9"><path d="M5.5 0.5 L0.8 4.5 L5.5 8.5 Z" fill="#c9c9c9"/></svg>
<svg class="r" style="left:59px;top:615px" width="6" height="9" viewBox="0 0 6 9"><path d="M0.5 0.5 L5.2 4.5 L0.5 8.5 Z" fill="#c9c9c9"/></svg>
<div class="r" style="left:104px;top:605px;width:65px;height:25px;background:#fff;border-left:1px solid #c6c6c6;border-right:1px solid #c6c6c6;border-bottom:2px solid #217346;"></div>
<span class="t" style="left:116.40px;top:611.00px;font-size:13px;line-height:16px;color:#217346;transform:scaleX(0.9267);font-weight:bold;">Sheet1</span>
<svg class="r" style="left:201px;top:611px" width="17" height="17" viewBox="0 0 17 17"><circle cx="8.5" cy="8.5" r="7.3" fill="none" stroke="#6e6e6e" stroke-width="1.3"/><path d="M8.5 4.5 V12.5 M4.5 8.5 H12.5" stroke="#6e6e6e" stroke-width="1.3"/></svg>
<div class="r" style="left:418.3px;top:614.5px;width:1.5px;height:1.5px;background:#9e9e9e;"></div>
<div class="r" style="left:418.3px;top:618.5px;width:1.5px;height:1.5px;background:#9e9e9e;"></div>
<div class="r" style="left:418.3px;top:622.5px;width:1.5px;height:1.5px;background:#9e9e9e;"></div>
<div class="r" style="left:450px;top:612.5px;width:209px;height:14.5px;background:#d4d4d4;"></div>
<div class="r" style="left:434.5px;top:612.5px;width:16px;height:15px;background:#fff;border:1px solid #8a8a8a;"></div>
<svg class="r" style="left:440px;top:616px" width="5" height="8" viewBox="0 0 5 8"><path d="M4.8 0.3 L0.6 4 L4.8 7.7 Z" fill="#6a6a6a"/></svg>
<div class="r" style="left:449.5px;top:612.5px;width:187.5px;height:15px;background:#fff;border:1px solid #8a8a8a;border-left:2px solid #7a7a7a;"></div>
<div class="r" style="left:658.5px;top:612.5px;width:15px;height:15px;background:#fff;border:1px solid #8a8a8a;"></div>
<svg class="r" style="left:664px;top:616px" width="5" height="8" viewBox="0 0 5 8"><path d="M0.3 0.3 L4.5 4 L0.3 7.7 Z" fill="#6a6a6a"/></svg>
<div class="r" style="left:4px;top:632.5px;width:691px;height:1px;background:#c8c8c8;"></div>
<div class="r" style="left:4px;top:633.5px;width:691px;height:22.5px;background:#f3f3f3;"></div>
<span class="t" style="left:12.30px;top:637.00px;font-size:11.5px;line-height:14px;color:#3b3b3b;transform:scaleX(0.9233);">Ready</span>
<span class="t" style="left:118.30px;top:637.00px;font-size:11.5px;line-height:14px;color:#3b3b3b;transform:scaleX(0.9423);">Average: 5144650</span>
<span class="t" style="left:223.30px;top:637.00px;font-size:11.5px;line-height:14px;color:#3b3b3b;transform:scaleX(0.9905);">Count: 10</span>
<span class="t" style="left:289.30px;top:637.00px;font-size:11.5px;line-height:14px;color:#3b3b3b;transform:scaleX(0.9287);">Sum: 20578600</span>
<div class="r" style="left:383.3px;top:633.5px;width:39.4px;height:22px;background:#c6c6c6;"></div>
<svg class="r" style="left:396px;top:637px" width="14" height="13" viewBox="0 0 14 13"><g fill="none" stroke="#6a6a6a" stroke-width="1"><rect x="0.5" y="0.5" width="12.4" height="12"/><path d="M4.6 0.5 V12.5 M8.8 0.5 V12.5 M0.5 4.5 H12.9 M0.5 8.5 H12.9"/></g></svg>
<svg class="r" style="left:436px;top:637px" width="15" height="13" viewBox="0 0 15 13"><g fill="none" stroke="#5a5a5a" stroke-width="1"><rect x="0.6" y="0.5" width="13.4" height="12"/><rect x="3.9" y="3" width="6.9" height="7.2"/><path d="M5.4 5 H9.4 M5.4 6.6 H9.4 M5.4 8.2 H9.4" stroke-width="0.7"/></g></svg>
<svg class="r" style="left:476px;top:637px" width="15" height="13" viewBox="0 0 15 13"><g fill="none" stroke="#5a5a5a" stroke-width="1"><rect x="0.5" y="0.5" width="13.2" height="12"/><path d="M4.3 0.5 V6.6 M10.6 0.5 V6.6 M0.5 6.6 H10.6"/></g></svg>
<div class="r" style="left:509px;top:644px;width:7px;height:1.2px;background:#444;"></div>
<div class="r" style="left:522px;top:644.1px;width:99px;height:1px;background:#555;"></div>
<div class="r" style="left:570px;top:639px;width:4.6px;height:11px;background:#555;"></div>
<div class="r" style="left:626.8px;top:644px;width:7px;height:1.2px;background:#444;"></div>
<div class="r" style="left:629.7px;top:641px;width:1.2px;height:7px;background:#444;"></div>
<span class="t" style="left:647.70px;top:637.00px;font-size:11.5px;line-height:14px;color:#3b3b3b;transform:scaleX(0.9274);">100%</span>
</div></div>
<div class="r" style="left:3px;top:3px;width:692px;height:653px;border-radius:7px;border:1px solid #217346;border-top-color:transparent;pointer-events:none"></div>
</body></html>
